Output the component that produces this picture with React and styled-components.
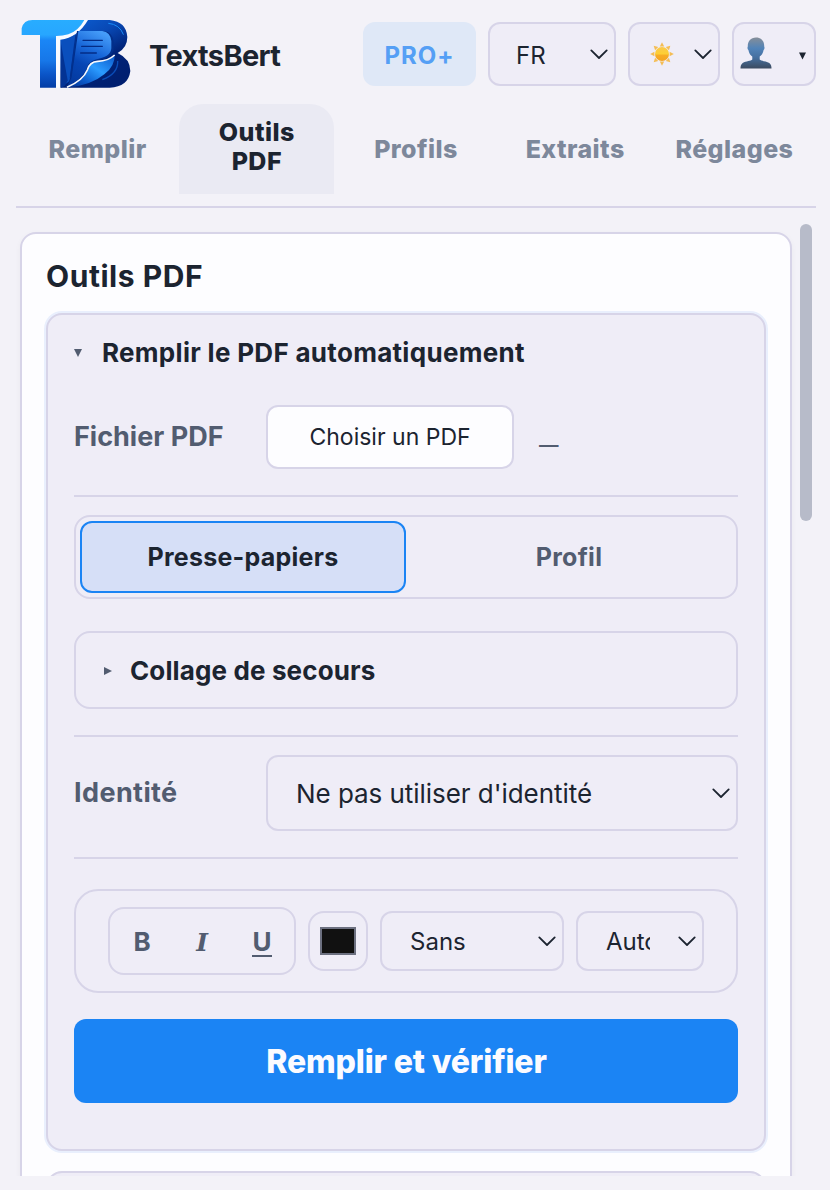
import React, { useState } from 'react';
import styled, { createGlobalStyle, css } from 'styled-components';

const GlobalStyle = createGlobalStyle`
  * {
    box-sizing: border-box;
  }
  body {
    margin: 0;
    background: #f3f2f8;
    color: #1c2430;
    font-family: Inter, 'Liberation Sans', sans-serif;
  }
  button {
    font-family: inherit;
    color: inherit;
    cursor: pointer;
  }
`;

const box = css`
  border: 2px solid #d7d4e8;
  border-radius: 12px;
  background: #efedf7;
`;

const Popup = styled.div`
  display: flex;
  flex-direction: column;
  width: 830px;
  height: 1190px;
  padding-bottom: 14px;
  overflow: hidden;
`;

const Header = styled.header`
  display: flex;
  align-items: center;
  gap: 12px;
  height: 104px;
  padding: 4px 14px 0 21px;
`;

const Brand = styled.div`
  display: flex;
  align-items: center;
  gap: 17px;
  flex: 1;
  font-size: 29px;
  font-weight: 700;
  letter-spacing: -0.65px;
`;

const BrandName = styled.span`
  padding-top: 2px;
`;

const ProBadge = styled.div`
  display: flex;
  align-items: center;
  justify-content: center;
  width: 113px;
  height: 64px;
  padding-top: 2px;
  border-radius: 12px;
  background: #dfe8f7;
  color: #559ff5;
  font-size: 24px;
  font-weight: 700;
  letter-spacing: 1px;
`;

const SelectBox = styled.button`
  ${box}
  display: flex;
  align-items: center;
  justify-content: space-between;
  width: ${(p) => p.$width}px;
  height: ${(p) => p.$height || 64}px;
  padding: 0 5px 0 ${(p) => p.$pad || 26}px;
  font-size: ${(p) => p.$size || 24}px;
  letter-spacing: ${(p) => p.$spacing || 0}px;
`;

const SelectValue = styled.span`
  width: ${(p) => (p.$clip ? `${p.$clip}px` : 'auto')};
  padding-top: ${(p) => p.$drop || 0}px;
  overflow: hidden;
  white-space: nowrap;
  text-align: left;
`;

const AccountArrow = styled.span`
  padding: 4px 3px 0 0;
`;

const Tabs = styled.nav`
  display: flex;
  gap: 4px;
  height: 104px;
  margin: 0 14px 0 16px;
  padding: 0 4px 12px 4px;
  border-bottom: 2px solid #d7d4e8;
`;

const Tab = styled.button`
  flex: 1 1 0;
  min-width: 0;
  padding: ${(p) => (p.$active ? '0 16px 4px' : '0 16px')};
  border: 0;
  border-radius: 24px 24px 0 0;
  background: ${(p) => (p.$active ? '#eaeaf3' : 'transparent')};
  color: ${(p) => (p.$active ? '#1c2430' : '#7d889b')};
  font-size: 25px;
  font-weight: 800;
  line-height: 29px;
  letter-spacing: 0.45px;
`;

const Scroller = styled.main`
  display: flex;
  flex: 1;
  gap: 8px;
  min-height: 0;
  margin-top: 16px;
  padding: 0 18px 0 20px;
  overflow: hidden;
`;

const ScrollThumb = styled.div`
  width: 12px;
  height: 297px;
  border-radius: 6px;
  background: #b7bbc9;
`;

const Card = styled.section`
  width: 772px;
  height: 1100px;
  margin-top: 8px;
  padding: 0 24px;
  border: 2px solid #d7d4e8;
  border-radius: 16px;
  background: #fdfdff;
  box-shadow: 0 2px 6px rgba(28, 36, 48, 0.04);
`;

const CardTitle = styled.h2`
  margin: 0;
  height: 79px;
  padding-top: 22px;
  font-size: 30px;
  font-weight: 700;
  line-height: 40px;
  letter-spacing: 0.55px;
`;

const Panel = styled.div`
  display: flex;
  flex-direction: column;
  width: 720px;
  height: 838px;
  margin-bottom: 20px;
  padding: 0 26px;
  border: 2px solid #d7d4e8;
  border-radius: 16px;
  background: #efedf7;
  box-shadow: ${(p) => (p.$open ? '0 0 0 2px #e9effd' : 'none')};
`;

const Summary = styled.div`
  display: flex;
  align-items: center;
  gap: ${(p) => p.$gap || 20}px;
  height: 76px;
  color: #1c2430;
  font-size: 26px;
  font-weight: 700;
  letter-spacing: ${(p) => p.$spacing}px;
`;

const SummaryText = styled.span`
  padding-bottom: 2px;
`;

const Row = styled.div`
  display: flex;
  align-items: center;
  height: ${(p) => p.$height}px;
  margin-top: ${(p) => p.$top}px;
`;

const Label = styled.span`
  width: 192px;
  padding-bottom: 1px;
  color: #525c70;
  font-size: 27px;
  font-weight: 700;
  letter-spacing: ${(p) => p.$spacing || 0}px;
`;

const FileButton = styled.button`
  ${box}
  width: 248px;
  height: 64px;
  background: #fdfdff;
  font-size: 23px;
`;

const FileName = styled.span`
  margin-left: 25px;
  padding-top: 15px;
  color: #525c70;
  font-size: 19.5px;
  font-weight: 600;
`;

const Divider = styled.hr`
  width: 100%;
  height: 2px;
  margin: ${(p) => p.$top}px 0 0;
  border: 0;
  background: #d7d4e8;
`;

const Segmented = styled.div`
  ${box}
  display: flex;
  height: 84px;
  margin-top: 18px;
  padding: 4px;
  border-radius: 16px;
`;

const Segment = styled.button`
  flex: 1;
  border: 2px solid ${(p) => (p.$active ? '#1b84f4' : 'transparent')};
  border-radius: 12px;
  background: ${(p) => (p.$active ? '#d6dff7' : 'transparent')};
  color: ${(p) => (p.$active ? '#1c2430' : '#525c70')};
  font-size: 25px;
  font-weight: 700;
  letter-spacing: 0.25px;
`;

const Details = styled.div`
  ${box}
  height: 78px;
  margin-top: 32px;
  padding-left: 28px;
  border-radius: 16px;
`;

const Toolbar = styled.div`
  ${box}
  display: flex;
  align-items: center;
  gap: 12px;
  height: 104px;
  margin-top: 30px;
  padding: 0 32px;
  border-radius: 24px;
`;

const StyleGroup = styled.div`
  ${box}
  display: flex;
  width: 188px;
  height: 68px;
  padding: 0 2px;
  border-radius: 16px;
`;

const StyleButton = styled.button`
  flex: 1;
  padding: 0;
  border: 0;
  background: none;
  color: #525c70;
  font-size: 26px;
  font-weight: 700;
`;

const Italic = styled.em`
  font-family: 'DejaVu Serif', serif;
  font-size: 25px;
`;

const Underlined = styled.span`
  display: inline-block;
  height: 30px;
  margin-top: 1px;
  border-bottom: 2px solid #525c70;
  line-height: 29px;
`;

const ColorWell = styled.div`
  ${box}
  display: flex;
  align-items: center;
  justify-content: center;
  width: 60px;
  height: 60px;
  border-radius: 16px;
`;

const Swatch = styled.div`
  width: 36px;
  height: 28px;
  border: 2px solid #6c7080;
  background: #111111;
`;

const PrimaryButton = styled.button`
  height: 84px;
  margin-top: 26px;
  padding: 0 0 0 1px;
  border: 0;
  border-radius: 12px;
  background: #1b84f4;
  color: #fbfbff;
  font-size: 32px;
  font-weight: 800;
  letter-spacing: -0.15px;
`;

const Icon = styled.svg`
  display: block;
  flex: none;
`;

function Chevron() {
  return (
    <Icon width="20" height="12" viewBox="0 0 20 12" fill="none">
      <path d="M2.3 2.4 L10 10 L17.7 2.4" stroke="#1c2430" strokeWidth="1.8" strokeLinejoin="round" strokeLinecap="round" />
    </Icon>
  );
}

function Triangle({ right, dark }) {
  return (
    <Icon width={dark ? 7 : 8} height="8" viewBox="0 0 8 8">
      <path d={right ? 'M0 0 L8 4 L0 8 Z' : 'M0 0 H8 L4 8 Z'} fill={dark ? '#1c2430' : '#525c70'} />
    </Icon>
  );
}

function Logo() {
  return (
    <Icon width="111" height="70" viewBox="18 22 333 210">
      <defs>
        <linearGradient id="stem" x1="0" y1="0" x2="0" y2="1">
          <stop offset="0" stopColor="#28adff" />
          <stop offset="0.22" stopColor="#27a6ff" />
          <stop offset="0.3" stopColor="#1a86f6" />
          <stop offset="0.6" stopColor="#1777e8" />
          <stop offset="0.8" stopColor="#0b55c8" />
          <stop offset="1" stopColor="#033da6" />
        </linearGradient>
        <linearGradient id="bowl" x1="0" y1="0" x2="0.6" y2="1">
          <stop offset="0" stopColor="#0c62d8" />
          <stop offset="0.4" stopColor="#0848b4" />
          <stop offset="0.7" stopColor="#002379" />
          <stop offset="1" stopColor="#001f70" />
        </linearGradient>
        <linearGradient id="sheet" x1="0.7" y1="0" x2="0.3" y2="1">
          <stop offset="0" stopColor="#459cf8" />
          <stop offset="0.35" stopColor="#1a69da" />
          <stop offset="0.65" stopColor="#0645b4" />
          <stop offset="1" stopColor="#043aa0" />
        </linearGradient>
        <linearGradient id="curl" x1="1" y1="0" x2="0" y2="1">
          <stop offset="0" stopColor="#0b57c8" />
          <stop offset="0.4" stopColor="#2a9bff" />
          <stop offset="0.7" stopColor="#0c5ccc" />
          <stop offset="1" stopColor="#012a85" />
        </linearGradient>
      </defs>
      {/* white gap between the two letters */}
      <path d="M121 228 V74 L150 68 Q190 58 207 24 H222 L200 66 L138 92 V228 Z" fill="#f8faff" />
      <path d="M20 70 V50 Q26 25 52 25 H208 Q190 58 160 68 Q144 73 123 73 V228 H75 V70 Z" fill="url(#stem)" />
      <path
        d="M219 25 H284 Q334 30 337 76 Q337 108 308 124 Q346 142 346 178 Q340 226 284 228 H136 V84 Q188 78 219 25 Z"
        fill="url(#bowl)"
      />
      <path d="M139 88 Q162 82 180 70 L164 208 L139 227 Z" fill="#0a4fbd" />
      <path d="M138 96 L158 206 L150 222 L138 228 Z" fill="#033394" />
      <path d="M186 58 H268 Q294 62 296 92 V116 Q290 140 248 146 Q222 152 216 180 Q200 208 155 226 L166 200 Z" fill="#022f8a" />
      <path d="M190 58 H262 Q286 61 289 88 V110 Q288 136 240 144 Q218 150 212 178 Q196 204 160 222 L170 196 Z" fill="url(#sheet)" />
      <path d="M183 70 L166 200" stroke="#02308f" strokeWidth="4" />
      <path d="M204 86 H262 M200 104 H262 M197 124 H244" stroke="#032c86" strokeWidth="4" strokeLinecap="round" />
      <path d="M281 35 Q314 38 325 68" stroke="#188cf8" strokeWidth="3" fill="none" strokeLinecap="round" />
      <path d="M308 148 Q310 186 262 204" stroke="#0a4db8" strokeWidth="4" fill="none" />
      <path d="M156 228 Q204 206 219 174 Q226 150 250 149 Q280 148 299 130 Q300 164 268 188 Q228 222 156 228 Z" fill="url(#curl)" />
      <path d="M156 227 Q204 206 217 175 Q224 150 248 149 Q280 148 299 130" stroke="#f8faff" strokeWidth="5" fill="none" />
    </Icon>
  );
}

function Sun() {
  const rays = [0, 45, 90, 135, 180, 225, 270, 315];
  return (
    <Icon width="24" height="24" viewBox="-12 -12 24 24">
      <defs>
        <linearGradient id="sun" x1="0" y1="0" x2="0" y2="1">
          <stop offset="0" stopColor="#fbc94b" />
          <stop offset="0.5" stopColor="#fdcf34" />
          <stop offset="0.58" stopColor="#f7ad25" />
          <stop offset="1" stopColor="#f5a421" />
        </linearGradient>
      </defs>
      {rays.map((angle) => (
        <path key={angle} d="M-2.2 -7.6 L0 -11.8 L2.2 -7.6 Z" fill="#f4bd55" transform={`rotate(${angle})`} />
      ))}
      <circle r="7" fill="url(#sun)" />
    </Icon>
  );
}

function Bust() {
  return (
    <Icon width="32" height="34" viewBox="0 0 32 34">
      <defs>
        <linearGradient id="bust" x1="0" y1="0" x2="0" y2="1">
          <stop offset="0" stopColor="#858e99" />
          <stop offset="0.35" stopColor="#5183b8" />
          <stop offset="0.65" stopColor="#456f9f" />
          <stop offset="1" stopColor="#3c4b60" />
        </linearGradient>
      </defs>
      <path
        d="M16 0.5 C21.5 0.5 24.4 4.4 24.2 9.5 C24.6 10 24.8 12 23.6 13 C23 16.5 21.4 18.5 19.7 19.5 V22.5 C21 24.3 26 23.8 29.3 26 C31.2 27.3 31.5 29.5 31.5 31.5 H0.5 C0.5 29.5 0.8 27.3 2.7 26 C6 23.8 11 24.3 12.3 22.5 V19.5 C10.6 18.5 9 16.5 8.4 13 C7.2 12 7.4 10 7.8 9.5 C7.6 4.4 10.5 0.5 16 0.5 Z"
        fill="url(#bust)"
      />
    </Icon>
  );
}

const tabs = ['Remplir', 'Outils PDF', 'Profils', 'Extraits', 'Réglages'];
const sources = ['Presse-papiers', 'Profil'];

export default function App() {
  const [tab, setTab] = useState('Outils PDF');
  const [source, setSource] = useState('Presse-papiers');

  return (
    <>
      <GlobalStyle />
      <Popup>
        <Header>
          <Brand>
            <Logo />
            <BrandName>TextsBert</BrandName>
          </Brand>
          <ProBadge>PRO+</ProBadge>
          <SelectBox $width={128}>
            <SelectValue $drop={2}>FR</SelectValue>
            <Chevron />
          </SelectBox>
          <SelectBox $width={92} $pad={20}>
            <Sun />
            <Chevron />
          </SelectBox>
          <SelectBox as="div" $width={84} $pad={6}>
            <Bust />
            <AccountArrow>
              <Triangle dark />
            </AccountArrow>
          </SelectBox>
        </Header>

        <Tabs>
          {tabs.map((name) => (
            <Tab key={name} $active={name === tab} onClick={() => setTab(name)}>
              {name}
            </Tab>
          ))}
        </Tabs>

        <Scroller>
          <Card>
            <CardTitle>Outils PDF</CardTitle>
            <Panel $open>
              <Summary $spacing={0.3}>
                <Triangle />
                <SummaryText>Remplir le PDF automatiquement</SummaryText>
              </Summary>

              <Row $height={64} $top={14}>
                <Label>Fichier PDF</Label>
                <FileButton>Choisir un PDF</FileButton>
                <FileName>—</FileName>
              </Row>
              <Divider $top={26} />

              <Segmented>
                {sources.map((name) => (
                  <Segment key={name} $active={name === source} onClick={() => setSource(name)}>
                    {name}
                  </Segment>
                ))}
              </Segmented>

              <Details>
                <Summary $spacing={0.13} $gap={18}>
                  <Triangle right />
                  <SummaryText>Collage de secours</SummaryText>
                </Summary>
              </Details>
              <Divider $top={26} />

              <Row $height={76} $top={18}>
                <Label $spacing={0.4}>Identité</Label>
                <SelectBox $width={472} $height={76} $size={26} $pad={28} $spacing={-0.05}>
                  <SelectValue>Ne pas utiliser d'identité</SelectValue>
                  <Chevron />
                </SelectBox>
              </Row>
              <Divider $top={26} />

              <Toolbar>
                <StyleGroup>
                  <StyleButton>B</StyleButton>
                  <StyleButton>
                    <Italic>I</Italic>
                  </StyleButton>
                  <StyleButton>
                    <Underlined>U</Underlined>
                  </StyleButton>
                </StyleGroup>
                <ColorWell>
                  <Swatch />
                </ColorWell>
                <SelectBox $width={184} $height={60} $pad={28}>
                  <SelectValue>Sans</SelectValue>
                  <Chevron />
                </SelectBox>
                <SelectBox $width={128} $height={60} $pad={28}>
                  <SelectValue $clip={44}>Auto</SelectValue>
                  <Chevron />
                </SelectBox>
              </Toolbar>

              <PrimaryButton>Remplir et vérifier</PrimaryButton>
            </Panel>
            <Panel />
          </Card>
          <ScrollThumb />
        </Scroller>
      </Popup>
    </>
  );
}
